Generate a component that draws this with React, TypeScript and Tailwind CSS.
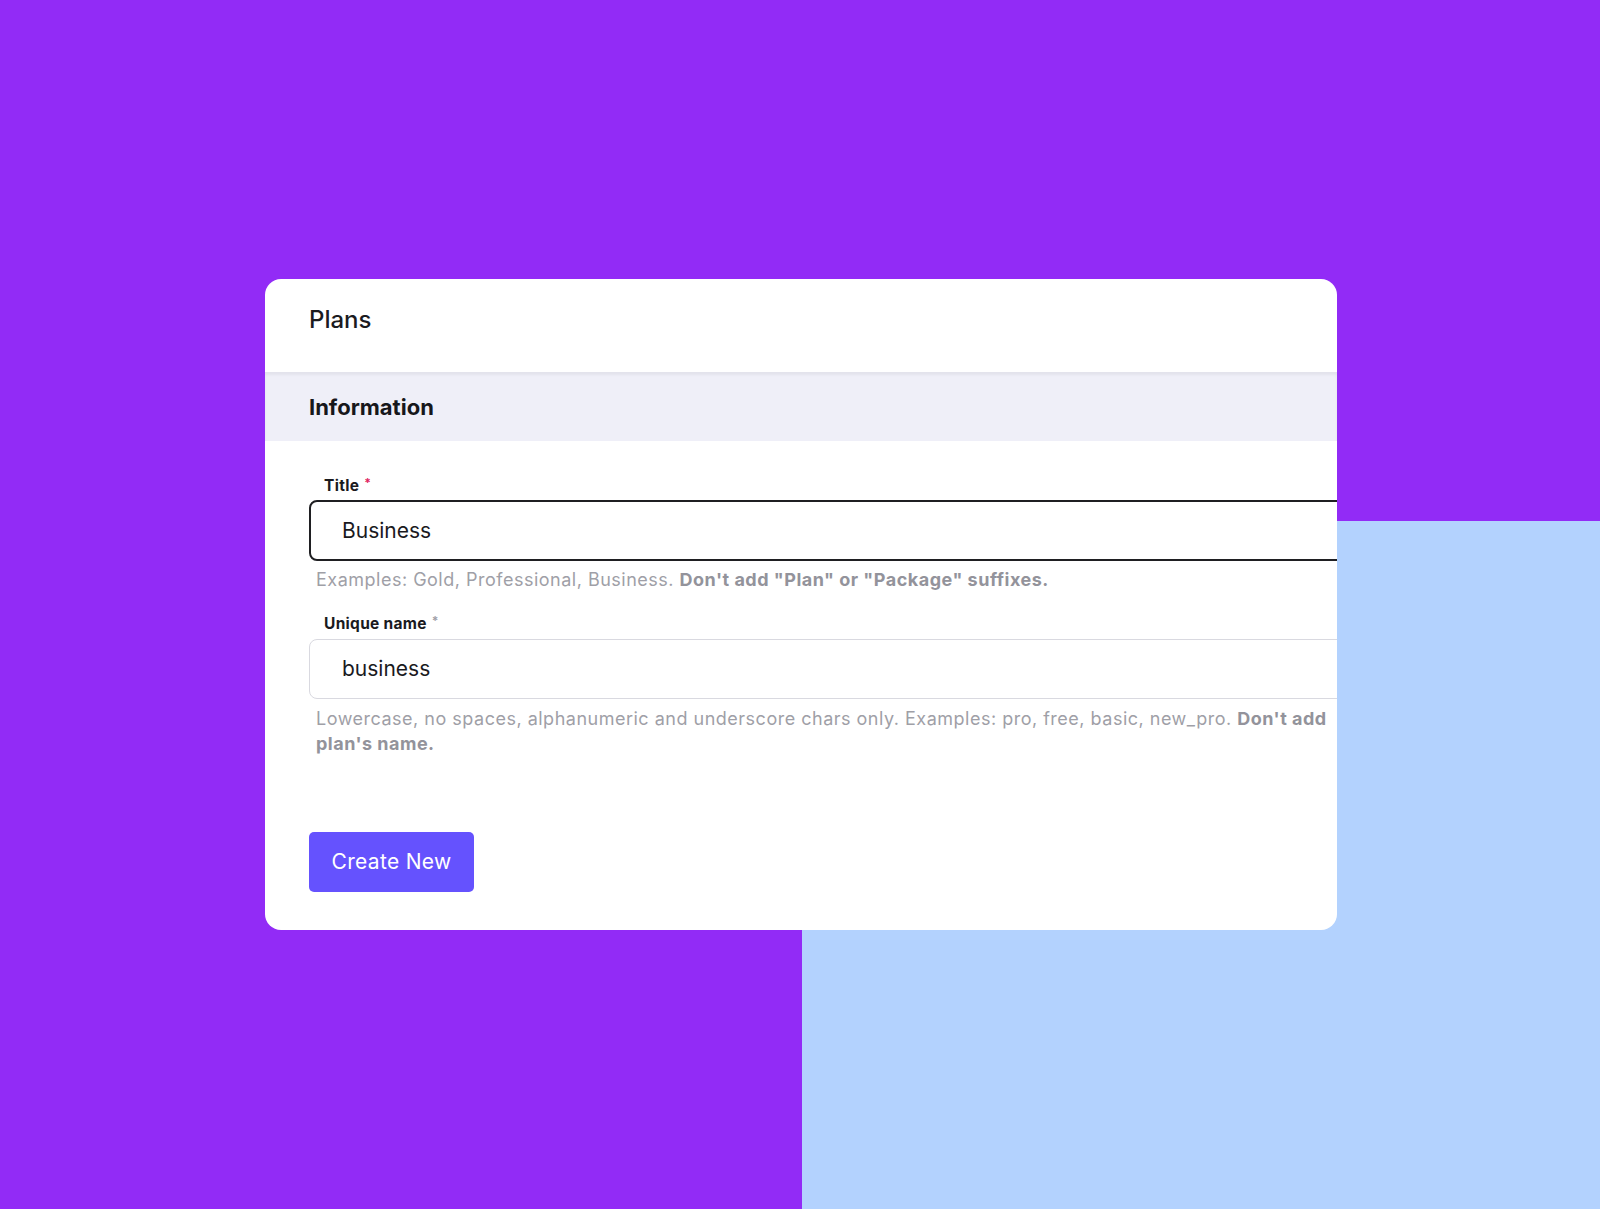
import React from 'react';

const App: React.FC = () => {
  return (
    <div className="relative min-h-[1209px] w-[1600px] overflow-hidden bg-[#922bf6] font-['Inter','Noto_Sans',sans-serif]">
      {/* decorative light blue block behind the card */}
      <div className="absolute left-[802px] top-[521px] h-[688px] w-[798px] bg-[#b3d2fe]" />

      <div className="relative pl-[265px] pt-[279px]">
        <div className="w-[1072px] overflow-hidden rounded-[16px] bg-white">
          <div className="h-[93px] px-[44px] pt-[25px]">
            <h1 className="text-[24px] font-medium leading-[32px] text-[#1b1b1f]">Plans</h1>
          </div>

          <div className="flex h-[69px] items-center bg-[#efeff8] px-[44px] shadow-[inset_0_3px_3px_rgba(0,0,0,0.05)]">
            <h2 className="text-[22px] font-bold leading-[28px] text-[#17171b]">Information</h2>
          </div>

          <div className="w-[1300px] pb-[38px] pl-[44px] pt-[35px]">
            <label className="flex items-start gap-[5px] pl-[15px] text-[15.5px] font-bold leading-[20px] tracking-[0.3px] text-[#1a1a1e]">
              Title
              <span className="mt-[-3px] text-[12px] text-[#e0245e]">*</span>
            </label>
            <div className="mt-[4px] flex h-[61px] items-center rounded-[8px] border-2 border-[#1f1f22] pl-[31px]">
              <span className="text-[21px] leading-[28px] text-[#1a1a1e]">Business</span>
            </div>
            <p className="mt-[7px] pl-[7px] text-[18px] leading-[24px] tracking-[0.5px] text-[#9f9fa7]">
              Examples: Gold, Professional, Business.{' '}
              <span className="font-bold text-[#93939b]">Don't add "Plan" or "Package" suffixes.</span>
            </p>

            <label className="mt-[22px] flex items-start gap-[5px] pl-[15px] text-[15.5px] font-bold leading-[20px] tracking-[0.3px] text-[#1a1a1e]">
              Unique name
              <span className="mt-[-3px] text-[12px] text-[#a0a0a8]">*</span>
            </label>
            <div className="mt-[5px] flex h-[60px] items-center rounded-[8px] border border-[#d9d9e0] pl-[32px]">
              <span className="text-[21px] leading-[28px] text-[#1a1a1e]">business</span>
            </div>
            <p className="mt-[7px] pl-[7px] text-[18px] leading-[25px] tracking-[0.5px] text-[#9f9fa7]">
              Lowercase, no spaces, alphanumeric and underscore chars only. Examples: pro, free, basic, new_pro.{' '}
              <span className="font-bold text-[#93939b]">Don't add</span>
              <br />
              <span className="font-bold text-[#93939b]">plan's name.</span>
            </p>

            <button className="mt-[76px] h-[60px] w-[165px] rounded-[5px] bg-[#6552fe] text-[21px] tracking-[0.3px] text-white">
              Create New
            </button>
          </div>
        </div>
      </div>
    </div>
  );
};

export default App;
